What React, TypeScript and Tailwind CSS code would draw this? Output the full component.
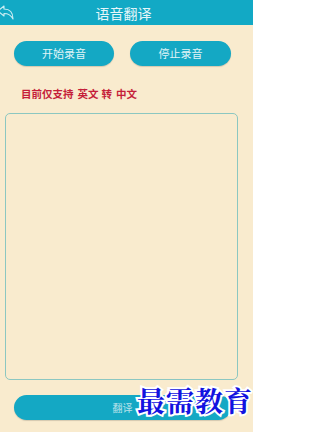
export default function App() {
  return (
    <div className="relative h-[432px] w-[261px] overflow-hidden bg-white font-['Noto_Sans_CJK_SC',sans-serif]">
      <div className="flex h-[432px] w-[253px] flex-col bg-[#f9ebce]">
        {/* Header */}
        <div className="relative flex h-[25px] shrink-0 items-center justify-center bg-[#12a9c5]">
          <svg className="absolute left-[-3px] top-[3px]" width="20" height="20" viewBox="0 0 20 20" fill="none">
            <path
              d="M1 8 L7 3 L7 6 C12 6 16 9 16 16 C14 12 11 10.5 7 10.5 L7 13 Z"
              stroke="#cdeef3"
              strokeWidth="1.1"
              strokeLinejoin="round"
            />
          </svg>
          <span className="ml-[-6px] text-[14px] leading-none text-[#e6f6f9]">语音翻译</span>
        </div>

        {/* Record buttons */}
        <div className="mt-[16px] flex pl-[14px]">
          <button className="flex h-[25px] w-[100px] items-center justify-center rounded-full bg-[#14a8c4] text-[11px] text-[#e0f4f7] shadow-[0_1px_1px_rgba(0,0,0,0.15)]">
            开始录音
          </button>
          <button className="ml-[16px] flex h-[25px] w-[101px] items-center justify-center rounded-full bg-[#14a8c4] text-[11px] text-[#e0f4f7] shadow-[0_1px_1px_rgba(0,0,0,0.15)]">
            停止录音
          </button>
        </div>

        {/* Notice */}
        <div className="mt-[23px] flex pl-[21px] text-[10.5px] font-bold leading-none text-[#c51f3a]">
          <span>目前仅支持</span>
          <span className="ml-[4px]">英文</span>
          <span className="ml-[3px]">转</span>
          <span className="ml-[4px]">中文</span>
        </div>

        {/* Text area */}
        <div className="ml-[5px] mt-[13px] h-[267px] w-[233px] rounded-[5px] border border-[#8cc7c1]" />

        {/* Translate button */}
        <button className="ml-[14px] mt-[15px] flex h-[25px] w-[217px] items-center justify-center rounded-full bg-[#14a8c4] text-[10px] text-[#b9e2ea] shadow-[0_1px_1px_rgba(0,0,0,0.15)]">
          翻译
        </button>
      </div>

      {/* Watermark */}
      <div className="absolute left-[137px] top-[386px] text-[28px] font-bold leading-none tracking-[1px] text-[#1212e0] [paint-order:stroke_fill] [-webkit-text-stroke:4px_white] font-['Noto_Serif_CJK_SC','Noto_Sans_CJK_SC',serif]">
        最需教育
      </div>
    </div>
  );
}
